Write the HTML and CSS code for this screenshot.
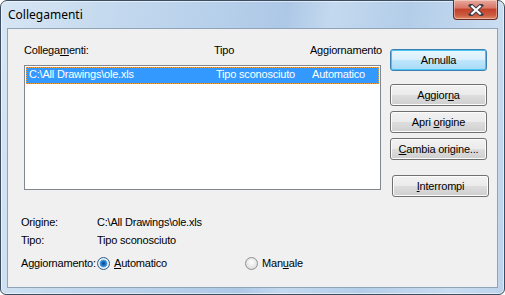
FILE: index.html
```html
<!DOCTYPE html>
<html>
<head>
<meta charset="utf-8">
<link rel="stylesheet" href="styles.css">
</head>
<body>
<div class="window">
  <div class="titlebar">
    <span class="title">Collegamenti</span>
    <div class="close">
      <svg width="18" height="12" viewBox="0 0 18 12"><path d="M4 1.5 L14 10.5 M14 1.5 L4 10.5" stroke="#40404a" stroke-width="4.2" stroke-linecap="square"/><path d="M4.3 1.8 L13.7 10.2 M13.7 1.8 L4.3 10.2" stroke="#ffffff" stroke-width="2.2"/></svg>
    </div>
  </div>
  <div class="client">
    <div class="top">
      <div class="listcol">
        <div class="headers">
          <span class="c1">Collega<u>m</u>enti:</span>
          <span class="c2">Tipo</span>
          <span class="c3">Aggiornamento</span>
        </div>
        <div class="list">
          <div class="row sel">
            <span class="c1">C:\All Drawings\ole.xls</span>
            <span class="c2">Tipo sconosciuto</span>
            <span class="c3">Automatico</span>
          </div>
        </div>
      </div>
      <div class="btncol">
        <button class="btn default">Annulla</button>
        <button class="btn b2">Aggior<u>n</u>a</button>
        <button class="btn">Apri <u>o</u>rigine</button>
        <button class="btn"><u>C</u>ambia origine...</button>
        <button class="btn b5"><u>I</u>nterrompi</button>
      </div>
    </div>
    <div class="info">
      <div class="irow"><span class="lbl">Origine:</span><span>C:\All Drawings\ole.xls</span></div>
      <div class="irow"><span class="lbl">Tipo:</span><span>Tipo sconosciuto</span></div>
      <div class="irow r3">
        <span class="lbl lbl2">Aggiornamento:</span>
        <span class="radio on"></span><span class="rtext"><u>A</u>utomatico</span>
        <span class="radio r2"></span><span class="rtext">Man<u>u</u>ale</span>
      </div>
    </div>
  </div>
</div>
</body>
</html>
```

FILE: styles.css
```css
* { box-sizing: border-box; }
html, body { margin: 0; padding: 0; background: #ffffff; }
body { width: 505px; height: 295px; overflow: hidden; font-family: "Liberation Sans", Arial, sans-serif; font-size: 11px; letter-spacing: -0.2px; color: #000; }
u { text-decoration: underline; text-underline-offset: 1px; }

.window {
  width: 505px; height: 295px;
  border: 1px solid #3b4d60;
  border-radius: 7px 7px 6px 6px;
  background: linear-gradient(100deg, #d8e6f4 0%, #c6daef 18%, #b6cfea 40%, #adc8e6 52%, #c4d9ef 60%, #b3cde9 74%, #c9dcf0 90%, #bcd3ec 100%);
  box-shadow: inset 0 0 0 1px rgba(255,255,255,0.55);
  display: flex; flex-direction: column;
}
.titlebar { height: 27px; display: flex; align-items: flex-start; justify-content: space-between; padding-left: 7px; }
.title { font-family: "Segoe UI", "Noto Sans", "Open Sans", sans-serif; font-size: 12px; letter-spacing: 0; line-height: 14px; margin-top: 7px; color: #000; }
.close {
  width: 45px; height: 20px; margin-right: 6px; margin-top: -1px;
  border: 1px solid #6b2a22; border-top: none;
  border-radius: 0 0 4px 4px;
  background: linear-gradient(#e8a99c 0%, #d9796a 40%, #c4432d 50%, #cc5a3e 80%, #e08c6a 100%);
  box-shadow: inset 0 0 0 1px rgba(255,255,255,0.35);
  display: flex; align-items: center; justify-content: center;
}
.client {
  margin: 0 6px 6px 6px; flex: 1;
  border: 1px solid #8fa3bb;
  background: #f0f0f0;
  display: flex; flex-direction: column;
}
.top { display: flex; }
.listcol { margin-left: 16px; padding-top: 15px; width: 358px; }
.headers { height: 13px; line-height: 13px; display: flex; }
.c1 { width: 190px; }
.c2 { width: 96px; }
.c3 { flex: 1; }
.list {
  margin-top: 8px; width: 357px; height: 125px;
  border: 1px solid #828790; background: #fff; padding: 1px;
}
.row { height: 17px; line-height: 15px; display: flex; padding-left: 3px; }
.row .c1 { width: 187px; }
.row.sel { background: #3399ff; color: #fff; outline: 1px dotted #f0a040; outline-offset: -1px; }

.btncol { margin-left: 8px; padding-top: 20px; display: flex; flex-direction: column; }
.btn {
  width: 97px; height: 22px; padding: 0; margin: 0;
  font-family: "Liberation Sans", Arial, sans-serif; font-size: 11px; letter-spacing: -0.2px; color: #000;
  border: 1px solid #707070; border-radius: 3px;
  background: linear-gradient(#f2f2f2 0%, #ebebeb 48%, #dddddd 52%, #cfcfcf 100%);
  box-shadow: inset 0 0 0 1px #fcfcfc;
  margin-bottom: 5px;
}
.btn.default {
  border-color: #3c7fb1;
  background: linear-gradient(#eaf6fd 0%, #d9f0fc 48%, #bee6fd 52%, #a7d9f5 100%);
  box-shadow: inset 0 0 0 1px #48c5f5;
  margin-bottom: 13px;
}
.btn.b5 { margin-top: 10px; margin-left: 2px; }

.info { margin-top: 14px; padding-left: 13px; }
.irow { display: flex; align-items: center; height: 13px; line-height: 13px; margin-bottom: 5px; }
.lbl { width: 76px; }
.r3 { margin-top: 10px; }
.radio {
  width: 13px; height: 13px; border-radius: 50%;
  border: 1px solid #8e8f8f;
  background: radial-gradient(circle at 50% 40%, #ffffff 0%, #e4e4e4 60%, #cfcfcf 100%);
  margin-right: 4px; flex: none;
}
.radio.on {
  border-color: #2c628b;
  background: radial-gradient(circle at 50% 50%, #0d4a86 0px, #1866b4 1.5px, #2f86d6 2.8px, #5aa8ea 3.6px, #e6f0f8 4.2px, #f0f0f0 4.8px, #d8d8d8 6px);
}
.rtext { width: 131px; }
```
